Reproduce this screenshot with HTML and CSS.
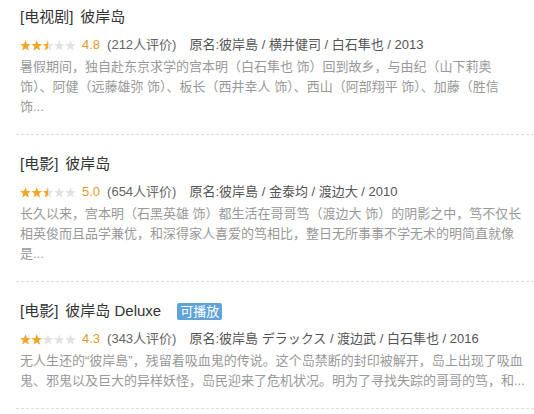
FILE: index.html
```html
<!DOCTYPE html>
<html lang="zh-CN">
<head>
  <meta charset="UTF-8">
  <meta name="viewport" content="width=device-width, initial-scale=1.0">
  <title>彼岸岛 - 搜索结果</title>
  <link rel="stylesheet" href="styles.css">
</head>
<body>
  <!-- Ícones compartilhados -->
  <svg class="svg-defs" aria-hidden="true">
    <defs>
      <symbol id="star" viewBox="0 0 11 11">
        <path d="M5.5 0.3L6.85 4.04L10.83 4.17L7.69 6.61L8.79 10.43L5.5 8.2L2.21 10.43L3.31 6.61L0.17 4.17L4.15 4.04Z"/>
      </symbol>
      <clipPath id="fill-25"><rect x="0" y="0" width="28" height="11"/></clipPath>
      <clipPath id="fill-20"><rect x="0" y="0" width="22.3" height="11"/></clipPath>
    </defs>
  </svg>

  <div class="results">
    <!-- Resultado 1 -->
    <div class="item">
      <h3 class="title"><span class="type">[电视剧]</span><span class="name">彼岸岛</span></h3>
      <div class="info">
        <svg class="stars" viewBox="0 0 56 11">
          <g class="off">
            <use href="#star" x="0" width="11" height="11"/>
            <use href="#star" x="11.25" width="11" height="11"/>
            <use href="#star" x="22.5" width="11" height="11"/>
            <use href="#star" x="33.75" width="11" height="11"/>
            <use href="#star" x="45" width="11" height="11"/>
          </g>
          <g class="on" clip-path="url(#fill-25)">
            <use href="#star" x="0" width="11" height="11"/>
            <use href="#star" x="11.25" width="11" height="11"/>
            <use href="#star" x="22.5" width="11" height="11"/>
          </g>
        </svg>
        <span class="score">4.8</span>
        <span class="count">(212人评价)</span>
        <span class="meta">原名:彼岸島 / 横井健司 / 白石隼也 / 2013</span>
      </div>
      <p class="desc">暑假期间，独自赴东京求学的宫本明（白石隼也 饰）回到故乡，与由纪（山下莉奥<br>饰）、阿健（远藤雄弥 饰）、板长（西井幸人 饰）、西山（阿部翔平 饰）、加藤（胜信<br>饰...</p>
    </div>

    <!-- Resultado 2 -->
    <div class="item">
      <h3 class="title"><span class="type">[电影]</span><span class="name">彼岸岛</span></h3>
      <div class="info">
        <svg class="stars" viewBox="0 0 56 11">
          <g class="off">
            <use href="#star" x="0" width="11" height="11"/>
            <use href="#star" x="11.25" width="11" height="11"/>
            <use href="#star" x="22.5" width="11" height="11"/>
            <use href="#star" x="33.75" width="11" height="11"/>
            <use href="#star" x="45" width="11" height="11"/>
          </g>
          <g class="on" clip-path="url(#fill-25)">
            <use href="#star" x="0" width="11" height="11"/>
            <use href="#star" x="11.25" width="11" height="11"/>
            <use href="#star" x="22.5" width="11" height="11"/>
          </g>
        </svg>
        <span class="score">5.0</span>
        <span class="count">(654人评价)</span>
        <span class="meta">原名:彼岸島 / 金泰均 / 渡边大 / 2010</span>
      </div>
      <p class="desc">长久以来，宫本明（石黑英雄 饰）都生活在哥哥笃（渡边大 饰）的阴影之中，笃不仅长<br>相英俊而且品学兼优，和深得家人喜爱的笃相比，整日无所事事不学无术的明简直就像<br>是...</p>
    </div>

    <!-- Resultado 3 -->
    <div class="item">
      <h3 class="title"><span class="type">[电影]</span><span class="name">彼岸岛 Deluxe</span><span class="badge">可播放</span></h3>
      <div class="info">
        <svg class="stars" viewBox="0 0 56 11">
          <g class="off">
            <use href="#star" x="0" width="11" height="11"/>
            <use href="#star" x="11.25" width="11" height="11"/>
            <use href="#star" x="22.5" width="11" height="11"/>
            <use href="#star" x="33.75" width="11" height="11"/>
            <use href="#star" x="45" width="11" height="11"/>
          </g>
          <g class="on" clip-path="url(#fill-20)">
            <use href="#star" x="0" width="11" height="11"/>
            <use href="#star" x="11.25" width="11" height="11"/>
          </g>
        </svg>
        <span class="score">4.3</span>
        <span class="count">(343人评价)</span>
        <span class="meta">原名:彼岸島 デラックス / 渡边武 / 白石隼也 / 2016</span>
      </div>
      <p class="desc">无人生还的“彼岸島”，残留着吸血鬼的传说。这个岛禁断的封印被解开，岛上出现了吸血<br>鬼、邪鬼以及巨大的异样妖怪，岛民迎来了危机状况。明为了寻找失踪的哥哥的笃，和...</p>
    </div>
  </div>
</body>
</html>
```

FILE: styles.css
```css
/* Reset */
* {
  margin: 0;
  padding: 0;
  box-sizing: border-box;
}
body {
  font-family: "Liberation Sans", "Noto Sans CJK SC", sans-serif;
  font-size: 13px;
  color: #666;
  background: #fff;
  overflow: hidden;
}
.svg-defs {
  display: block;
  width: 0;
  height: 0;
  overflow: hidden;
}

/* Lista de resultados */
.results {
  padding-left: 16px;
}
.item {
  padding: 18px 8px 17px 4px;
  border-bottom: 1px dashed #ddd;
}
.item:first-child {
  padding-top: 6px;
}

/* Título */
.title {
  display: flex;
  align-items: center;
  font-size: 15px;
  font-weight: normal;
  line-height: 22px;
  color: #333;
}
.title .name {
  margin-left: 7px;
}
.badge {
  margin-left: 16px;
  padding: 0 3px;
  font-size: 13px;
  line-height: 17px;
  color: #fff;
  background: #5fa3d8;
  border-radius: 2px;
}

/* Avaliação */
.info {
  display: flex;
  align-items: center;
  margin-top: 7px;
  line-height: 20px;
}
.stars {
  width: 56px;
  height: 11px;
  margin-right: 6px;
}
.stars .off {
  fill: #e2e2e2;
}
.stars .on {
  fill: #f5a623;
}
.score {
  color: #e39b2d;
  margin-right: 7px;
}
.count {
  margin-right: 13px;
}
.meta {
  color: #555;
}

/* Descrição */
.desc {
  margin-top: 2px;
  line-height: 20px;
  color: #999;
}
```
